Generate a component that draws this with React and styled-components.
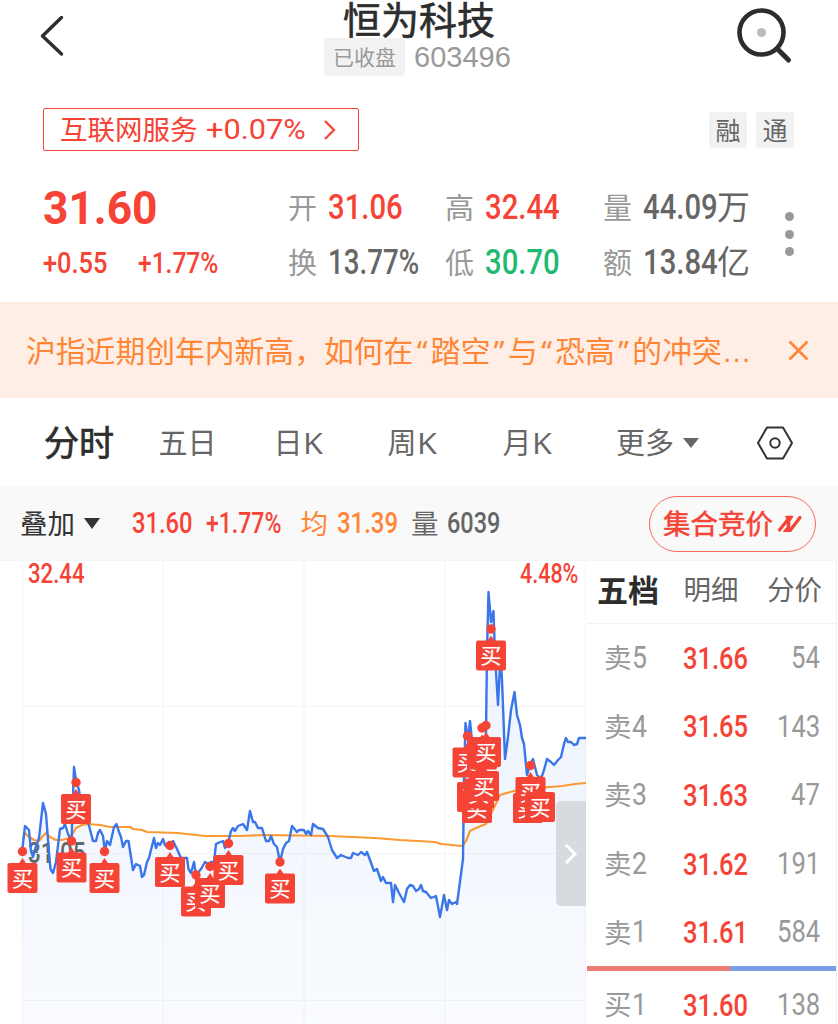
import React from "react";
import styled, { createGlobalStyle } from "styled-components";

const RED = "#f54336";
const ORANGE = "#ff8636";
const CJK = '"Noto Sans CJK SC", sans-serif';

const GlobalStyle = createGlobalStyle`
  *, *::before, *::after { box-sizing: border-box; }
  body { margin: 0; background: #fff; overflow: hidden; }
  svg { display: block; flex: none; }
`;

const ADVANCE = { ".": 0.27, "+": 0.56, "%": 0.735 };
const natural = (s) => [...s].reduce((sum, c) => sum + (ADVANCE[c] ?? 0.5645), 0);

const FigureBox = styled.span`
  display: inline-block;
  flex: none;
  width: ${(p) => p.$w}px;
  height: ${(p) => p.$size}px;
  margin-left: ${(p) => p.$ml || 0}px;
  font: ${(p) => p.$weight || 500} ${(p) => p.$size}px/${(p) => p.$size}px Roboto, sans-serif;
  color: ${(p) => p.$color || RED};
  white-space: nowrap;
`;
const FigureInk = styled.span`
  display: inline-block;
  transform: scaleX(${(p) => p.$sx});
  transform-origin: 0 50%;
`;
function Figure({ children, w, size, ...rest }) {
  return (
    <FigureBox $w={w} $size={size} $ml={rest.ml} $weight={rest.weight} $color={rest.color}>
      <FigureInk $sx={w / (natural(children) * size)}>{children}</FigureInk>
    </FigureBox>
  );
}

const Word = styled.span`
  flex: none;
  font: ${(p) => p.$weight || 400} ${(p) => p.$size}px/1.2 ${CJK};
  padding-bottom: 3px;
  color: ${(p) => p.$color || "#999"};
  margin-left: ${(p) => p.$ml || 0}px;
  white-space: nowrap;
  -webkit-text-stroke: ${(p) => p.$stroke || 0}px currentColor;
`;

const Page = styled.main`
  width: 838px;
  height: 1024px;
  overflow: hidden;
  background: #fff;
`;

const Header = styled.header`
  height: 84px;
  display: grid;
  grid-template-columns: 324px 1fr 324px;
`;
const BackButton = styled.div`
  padding: 14px 0 0 38px;
`;
const SearchButton = styled.div`
  padding: 6px 0 0 221px;
`;
const TitleBlock = styled.div`
  display: flex;
  flex-direction: column;
`;
const Title = styled.h1`
  margin: 0;
  height: 38px;
  padding-left: 19px;
  font: 400 38px/36px ${CJK};
  color: #2d2d2d;
  white-space: nowrap;
  -webkit-text-stroke: 0.6px currentColor;
`;
const SubTitle = styled.div`
  display: flex;
  align-items: center;
  gap: 9px;
  height: 38px;
`;
const StatusBadge = styled.span`
  width: 81px;
  height: 38px;
  border-radius: 4px;
  background: #f2f2f2;
  color: #999;
  font: 400 21px/36px ${CJK};
  text-align: center;
`;
const Code = styled.span`
  font: 400 29px/38px "Liberation Sans", sans-serif;
  color: #999;
`;

const IndustryRow = styled.div`
  height: 92px;
  padding: 24px 43px 0;
  display: flex;
  justify-content: space-between;
  align-items: flex-start;
`;
const IndustryLink = styled.div`
  width: 316px;
  height: 43px;
  border: 1.6px solid ${RED};
  border-radius: 2px;
  padding: 0 16px;
  display: flex;
  align-items: center;
  svg { margin-left: 17px; }
`;
const Tags = styled.div`
  display: flex;
  gap: 9px;
  padding: 4px 1px 0 0;
`;
const Tag = styled.span`
  width: 38px;
  height: 36px;
  border-radius: 2px;
  background: #f2f2f2;
  color: #666;
  font: 400 25px/34px ${CJK};
  text-align: center;
`;

const Quote = styled.section`
  height: 126px;
  display: grid;
  grid-template-columns: 246px 157px 158px 182px 1fr;
  padding-left: 42px;
`;
const QuoteColumn = styled.div`
  display: flex;
  flex-direction: column;
  padding-top: 4px;
`;
const QuoteCell = styled.div`
  height: 55px;
  display: flex;
  align-items: center;
`;
const MoreDots = styled.div`
  display: flex;
  flex-direction: column;
  align-items: center;
  gap: 8.5px;
  width: 9px;
  margin-top: 36px;
`;
const Dot = styled.i`
  width: 9px;
  height: 9px;
  border-radius: 50%;
  background: #999;
`;

const Banner = styled.div`
  height: 96px;
  padding: 0 29px 0 26px;
  display: flex;
  align-items: center;
  justify-content: space-between;
  background: #ffeee5;
`;
const BannerText = styled.span`
  font: 400 29.8px/44px ${CJK};
  color: ${ORANGE};
  white-space: nowrap;
`;
const Mark = styled.span`
  display: inline-block;
  width: 17.5px;
  text-align: center;
  font-family: "Noto Sans", sans-serif;
`;
const Ellipsis = styled.span`
  font-family: "Liberation Sans", sans-serif;
`;

const Tabs = styled.nav`
  height: 89px;
  display: flex;
  align-items: center;
  padding-left: 44px;
`;
const Tab = styled.span`
  flex: none;
  width: ${(p) => p.$w}px;
  font: 400 ${(p) => (p.$active ? 35 : 29)}px/48px ${CJK};
  padding-bottom: 3px;
  color: ${(p) => (p.$active ? "#2d2d2d" : "#666")};
  -webkit-text-stroke: ${(p) => (p.$active ? 0.7 : 0)}px currentColor;
  white-space: nowrap;
`;
const Letter = styled.span`
  display: inline-block;
  font: 400 30px/30px "Open Sans", sans-serif;
  transform: scaleX(1.08);
  transform-origin: 0 50%;
`;

const Toolbar = styled.div`
  height: 73px;
  display: flex;
  align-items: center;
  padding-left: 20px;
  background: #f9f9f9;
`;
const Caret = styled.i`
  flex: none;
  border: ${(p) => p.$s}px solid transparent;
  border-top: ${(p) => p.$h}px solid ${(p) => p.$color};
  border-bottom: 0;
  margin-left: ${(p) => p.$ml}px;
`;
const AuctionButton = styled.div`
  width: 167px;
  height: 56px;
  margin-left: 149px;
  border: 1.5px solid #f7685e;
  border-radius: 28px;
  display: flex;
  align-items: center;
  padding-left: 13px;
  svg { margin-left: 4px; }
`;

const Market = styled.section`
  display: flex;
  height: 464px;
`;
const ChartPane = styled.div`
  position: relative;
  width: 586px;
  height: 464px;
`;
const ChartLabel = styled.div`
  position: absolute;
  left: ${(p) => p.$x}px;
  top: ${(p) => p.$y}px;
  line-height: 0;
`;
const ExpandHandle = styled.div`
  position: absolute;
  right: 0;
  top: 241px;
  width: 30px;
  height: 105px;
  border-radius: 5px 0 0 5px;
  background: rgba(204, 208, 212, 0.72);
  display: flex;
  align-items: center;
  justify-content: center;
`;
const ChartSvg = styled.svg`
  position: relative;
`;
const Glyph = styled.text`
  font: 400 21px ${CJK};
  fill: #fff;
  text-anchor: middle;
  stroke: #fff;
  stroke-width: 0.2px;
`;

const BookPane = styled.aside`
  width: 250px;
  margin-left: 1px;
  border-right: 1px solid #f1f1f1;
  border-top: 1px solid #f4f4f4;
  background: #fff;
`;
const BookTabs = styled.div`
  height: 63px;
  display: flex;
  align-items: center;
  padding: 0 0 4px 10px;
  border-bottom: 1px solid #f1f1f1;
`;
const BookRow = styled.div`
  height: 68.6px;
  display: flex;
  align-items: center;
  padding: 0 16px 0 17px;
`;
const Side = styled.span`
  width: 77px;
  display: flex;
  align-items: center;
`;
const Volume = styled.span`
  margin-left: auto;
  line-height: 0;
`;
const Ratio = styled.div`
  display: flex;
  height: 5px;
  margin-top: -1px;
  background: #7a9ee8;
`;
const RatioSell = styled.i`
  width: 143px;
  background: #ec7c74;
`;

const PRICE = [
  [22, 852], [25, 826], [29, 830], [31, 851], [33, 857], [36, 846], [39, 838], [43, 803], [46, 814], [49, 852], [50.5, 869],
  [53, 873], [56, 862], [60, 829], [63, 828], [65, 824], [68, 834], [71.5, 841], [74, 767], [76, 780], [79, 790],
  [82, 812], [88, 822], [93, 841], [96, 841], [98, 833], [100, 830], [103, 836], [105, 851], [107, 841], [110, 845],
  [114, 827], [116.5, 824], [119, 832], [121, 837], [123, 847], [126, 841], [128.5, 841], [133, 870], [136, 864],
  [140, 866], [142, 877], [144, 875], [147, 862], [149, 858], [154, 838], [156, 848], [158, 843], [160, 845],
  [163, 839], [165, 845], [168, 848], [173, 841], [177, 849], [181, 858], [187, 858], [188.5, 869], [191, 873],
  [194, 862], [196, 875], [201, 869], [205, 862], [208, 864], [211, 862], [214, 862], [216, 844], [218, 843],
  [223, 841], [225, 848], [228, 843], [231, 831], [233, 828], [235, 831], [238, 826], [243, 824], [247, 830],
  [250, 811], [253, 822], [255, 822], [258, 828], [262, 828], [266, 841], [269, 841], [271, 836], [274, 844],
  [277, 847], [280, 862], [283, 849], [286, 843], [289, 841], [292, 826], [297, 832], [299, 830], [304, 830],
  [306, 834], [308, 831], [311, 835], [313, 824], [318, 828], [323, 829], [328, 837], [332, 850], [337, 858],
  [341, 855], [348, 858], [351, 858], [353, 853], [358, 855], [361, 852], [365, 855], [367, 852], [370, 860],
  [374, 871], [377, 869], [381, 881], [383, 877], [386, 883], [391, 883], [393, 902], [395, 885], [399, 893],
  [404, 902], [407, 889], [410, 885], [413, 886], [416, 891], [419, 889], [421, 885], [423, 891], [426, 892], [431, 898],
  [436, 896], [440, 917], [444, 895], [447, 910], [449, 900], [452, 904], [456, 902], [457, 904], [463, 859],
  [464, 780], [465.5, 723], [468, 740], [470, 721], [473, 750], [486, 735], [487, 650], [488.5, 592], [491, 622], [493.5, 611],
  [495, 655], [498, 705], [500.5, 655], [502, 680], [505, 759], [508, 737], [511, 710], [514.5, 692], [517, 715],
  [520, 725], [522, 738], [524, 744], [527, 775], [530, 765], [533, 759], [537, 775], [541, 779], [544, 770],
  [547, 759], [551, 762], [554, 765], [558, 760], [561, 757], [564, 744], [566, 738], [568, 742], [571, 742],
  [574, 745], [577, 744], [579, 738], [586, 738],
];
const AVERAGE = [
  [23, 840], [25, 833], [28, 836], [34, 840], [39, 841], [43, 836], [46, 833], [50, 837], [56, 840], [62, 840],
  [70, 838], [76, 828], [82, 825], [88, 824], [100, 825], [110, 827], [130, 827], [133, 829], [142, 830],
  [147, 832], [178, 833], [205, 836], [240, 836], [265, 835], [330, 836], [375, 838], [400, 840], [435, 842],
  [441, 844], [462, 846], [466, 841], [470, 831], [476, 828], [486, 824], [500, 795], [510, 792], [522, 789],
  [550, 787], [562, 786], [575, 784], [586, 783],
];
/* Centre x and dot y of every buy marker, in drawing order. */
const BUYS = [
  [22.5, 851.5], [71.5, 841], [76, 782.5], [104.5, 851.5], [170, 845.5], [196, 875], [210, 866.5], [228.5, 843.5],
  [280, 862], [491, 629], [467.5, 736], [482, 728], [486, 725.5], [472, 770.5], [477, 781.5], [479, 767], [484, 759.5],
  [528, 781.5], [530.5, 765.5], [540, 780.5],
];
const line = (pts) => "M" + pts.map(([x, y]) => `${x} ${y}`).join("L");

function Chart() {
  return (
    <ChartSvg width="586" height="464" viewBox="0 560 586 464">
      <defs>
        <linearGradient id="area" x1="0" y1="0" x2="0" y2="1">
          <stop offset="0" stopColor="#3b78e7" stopOpacity="0.1" />
          <stop offset="1" stopColor="#3b78e7" stopOpacity="0.03" />
        </linearGradient>
      </defs>
      <path d="M0 560.5H586M22.5 560V1024M163 560V1024M304 560V1024M445 560V1024M22 706.5H586M22 853.5H586M22 1000.5H586M585.5 560V1024" stroke="#f4f5f6" fill="none" />
      <path d={`${line(PRICE)}V1024H22Z`} fill="url(#area)" />
      <path d={line(AVERAGE)} fill="none" stroke="#fb9a32" strokeWidth="2.2" strokeLinejoin="round" />
      <path d={line(PRICE)} fill="none" stroke="#3a76ea" strokeWidth="2.4" strokeLinejoin="round" />
      {BUYS.map(([x, y]) => <circle key={`${x}-${y}`} cx={x} cy={y} r="4.7" fill={RED} />)}
      {BUYS.map(([x, y]) => (
        <g key={`${x}-${y}`}>
          <path d={`M${x} ${y + 6.5}l4 6h-8z`} fill={RED} />
          <rect x={x - 15} y={y + 11.5} width="30" height="30" rx="2" fill={RED} />
          <Glyph x={x} y={y + 34}>买</Glyph>
        </g>
      ))}
    </ChartSvg>
  );
}

const STATS = [
  [["开", "31.06", 74, RED], ["换", "13.77%", 90.5, "#666"]],
  [["高", "32.44", 74, RED], ["低", "30.70", 74, "#1fb973"]],
  [["量", "44.09", 74, "#666", "万"], ["额", "13.84", 74, "#666", "亿"]],
];
const BOOK = [
  ["卖", "5", "31.66", "54"], ["卖", "4", "31.65", "143"], ["卖", "3", "31.63", "47"],
  ["卖", "2", "31.62", "191"], ["卖", "1", "31.61", "584"], ["买", "1", "31.60", "138"],
];

function Order({ row: [side, level, price, volume] }) {
  return (
    <BookRow>
      <Side>
        <Word $size={27.5}>{side}</Word>
        <Figure w={15} size={30.5} weight={450} color="#999">{level}</Figure>
      </Side>
      <Figure ml={1.5} w={64.5} size={31}>{price}</Figure>
      <Volume><Figure w={volume.length * 14.5} size={30.5} weight={450} color="#999">{volume}</Figure></Volume>
    </BookRow>
  );
}

export default function App() {
  return (
    <Page>
      <GlobalStyle />
      <Header>
        <BackButton>
          <svg width="28" height="44" viewBox="0 0 28 44" fill="none" stroke="#2d2d2d" strokeWidth="3.4" strokeLinecap="round" strokeLinejoin="round">
            <path d="M23.5 3.5L4.5 22L23.5 40" />
          </svg>
        </BackButton>
        <TitleBlock>
          <Title>恒为科技</Title>
          <SubTitle>
            <StatusBadge>已收盘</StatusBadge>
            <Code>603496</Code>
          </SubTitle>
        </TitleBlock>
        <SearchButton>
          <svg width="60" height="60" viewBox="735 6 60 60" fill="none" stroke="#2d2d2d">
            <circle cx="761.5" cy="32.5" r="22" strokeWidth="4.6" />
            <path d="M777.5 49L788.5 60" strokeWidth="5" strokeLinecap="round" />
            <circle cx="761.5" cy="32.5" r="4.5" fill="#bbb" stroke="none" />
          </svg>
        </SearchButton>
      </Header>

      <IndustryRow>
        <IndustryLink>
          <Word $size={27.5} $color={RED}>互联网服务</Word>
          <Figure ml={8} w={100} size={28} weight={400}>+0.07%</Figure>
          <svg width="14" height="22" viewBox="0 0 14 22" fill="none" stroke={RED} strokeWidth="2.3">
            <path d="M2 2L11 11L2 20" />
          </svg>
        </IndustryLink>
        <Tags>
          <Tag>融</Tag>
          <Tag>通</Tag>
        </Tags>
      </IndustryRow>

      <Quote>
        <QuoteColumn>
          <QuoteCell><Figure ml={1} w={112} size={46} weight={700}>31.60</Figure></QuoteCell>
          <QuoteCell>
            <Figure ml={0.5} w={64} size={30}>+0.55</Figure>
            <Figure ml={31.5} w={80} size={30}>+1.77%</Figure>
          </QuoteCell>
        </QuoteColumn>
        {STATS.map((column) => (
          <QuoteColumn key={column[0][0]}>
            {column.map(([name, value, w, color, unit]) => (
              <QuoteCell key={name}>
                <Word $size={29}>{name}</Word>
                <Figure ml={11} w={w} size={35} color={color}>{value}</Figure>
                {unit && <Word $size={33} $color="#666">{unit}</Word>}
              </QuoteCell>
            ))}
          </QuoteColumn>
        ))}
        <MoreDots><Dot /><Dot /><Dot /></MoreDots>
      </Quote>

      <Banner>
        <BannerText>
          沪指近期创年内新高，如何在<Mark>“</Mark>踏空<Mark>”</Mark>与<Mark>“</Mark>恐高<Mark>”</Mark>的冲突<Ellipsis>…</Ellipsis>
        </BannerText>
        <svg width="21" height="21" viewBox="0 0 21 21" stroke={ORANGE} strokeWidth="2.6">
          <path d="M1.5 1.5L19.5 19.5M19.5 1.5L1.5 19.5" />
        </svg>
      </Banner>

      <Tabs>
        <Tab $w={114.5} $active>分时</Tab>
        <Tab $w={115}>五日</Tab>
        <Tab $w={114}>日<Letter>K</Letter></Tab>
        <Tab $w={115}>周<Letter>K</Letter></Tab>
        <Tab $w={113.5}>月<Letter>K</Letter></Tab>
        <Tab $w={59}>更多</Tab>
        <Caret $s={8} $h={10} $ml={8} $color="#666" />
        <svg width="38" height="34" viewBox="0 0 38 34" fill="none" stroke="#333" strokeWidth="2" strokeLinejoin="round" style={{ marginLeft: 57 }}>
          <path d="M11 1.5H27L36 17L27 32.5H11L2 17Z" />
          <circle cx="19" cy="17" r="4.7" />
        </svg>
      </Tabs>

      <Toolbar>
        <Word $size={27.5} $color="#333">叠加</Word>
        <Caret $s={8} $h={11} $ml={9} $color="#333" />
        <Figure ml={32} w={60} size={29}>31.60</Figure>
        <Figure ml={13.5} w={75} size={29}>+1.77%</Figure>
        <Word $size={27.5} $color={ORANGE} $ml={20}>均</Word>
        <Figure ml={9} w={60.5} size={29} color={ORANGE}>31.39</Figure>
        <Word $size={27.5} $color="#666" $ml={13.5}>量</Word>
        <Figure ml={8.5} w={53} size={29} color="#666">6039</Figure>
        <AuctionButton>
          <Word $size={27.5} $color={RED} $stroke={0.5}>集合竞价</Word>
          <svg width="26" height="20" viewBox="0 0 26 20" fill={RED} stroke={RED} strokeWidth="3.2" strokeLinecap="round" strokeLinejoin="round">
            <path d="M2.5 16L10.5 6M23 3.5L13.5 16" fill="none" />
            <path d="M9 2.500H15.500L12.500 7V13.500L13.500 17.200H7L10.500 13.200V5.500Z" strokeWidth="1.6" />
          </svg>
        </AuctionButton>
      </Toolbar>

      <Market>
        <ChartPane>
          <ChartLabel $x={28} $y={279}><Figure w={57} size={29} color="#666">31.05</Figure></ChartLabel>
          <Chart />
          <ChartLabel $x={27.5} $y={0}><Figure w={56} size={28}>32.44</Figure></ChartLabel>
          <ChartLabel $x={519.5} $y={0}><Figure w={58} size={28}>4.48%</Figure></ChartLabel>
          <ExpandHandle>
            <svg width="14" height="22" viewBox="0 0 14 22" fill="none" stroke="#fff" strokeWidth="3">
              <path d="M2 2L11 11L2 20" />
            </svg>
          </ExpandHandle>
        </ChartPane>
        <BookPane>
          <BookTabs>
            <Word $size={31} $weight={700} $color="#2d2d2d">五档</Word>
            <Word $size={27.5} $color="#666" $ml={24.5}>明细</Word>
            <Word $size={27.5} $color="#666" $ml={28.5}>分价</Word>
          </BookTabs>
          {BOOK.slice(0, 5).map((row) => <Order key={row[2]} row={row} />)}
          <Ratio><RatioSell /></Ratio>
          <Order row={BOOK[5]} />
        </BookPane>
      </Market>
    </Page>
  );
}
